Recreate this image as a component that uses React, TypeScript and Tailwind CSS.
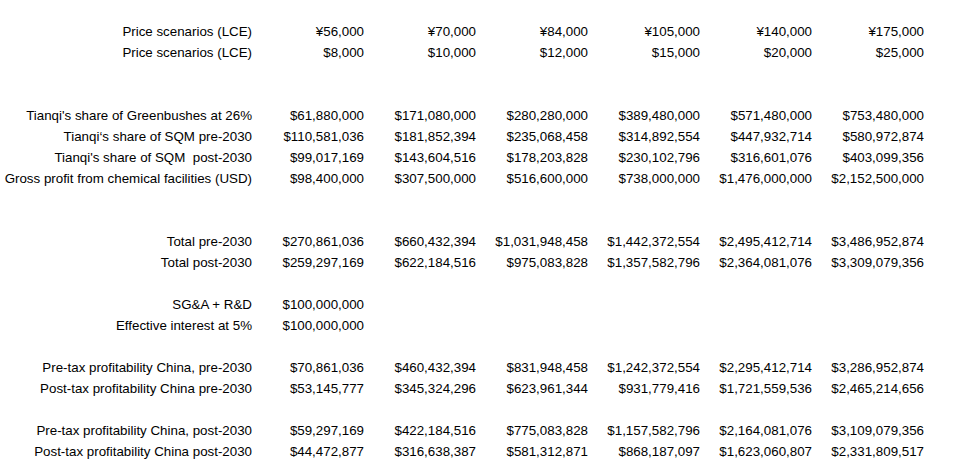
const rows: (string[] | null)[] = [
  ["Price scenarios (LCE)", "¥56,000", "¥70,000", "¥84,000", "¥105,000", "¥140,000", "¥175,000"],
  ["Price scenarios (LCE)", "$8,000", "$10,000", "$12,000", "$15,000", "$20,000", "$25,000"],
  null,
  null,
  ["Tianqi's share of Greenbushes at 26%", "$61,880,000", "$171,080,000", "$280,280,000", "$389,480,000", "$571,480,000", "$753,480,000"],
  ["Tianqi‘s share of SQM pre-2030", "$110,581,036", "$181,852,394", "$235,068,458", "$314,892,554", "$447,932,714", "$580,972,874"],
  ["Tianqi's share of SQM  post-2030", "$99,017,169", "$143,604,516", "$178,203,828", "$230,102,796", "$316,601,076", "$403,099,356"],
  ["Gross profit from chemical facilities (USD)", "$98,400,000", "$307,500,000", "$516,600,000", "$738,000,000", "$1,476,000,000", "$2,152,500,000"],
  null,
  null,
  ["Total pre-2030", "$270,861,036", "$660,432,394", "$1,031,948,458", "$1,442,372,554", "$2,495,412,714", "$3,486,952,874"],
  ["Total post-2030", "$259,297,169", "$622,184,516", "$975,083,828", "$1,357,582,796", "$2,364,081,076", "$3,309,079,356"],
  null,
  ["SG&A + R&D", "$100,000,000", "", "", "", "", ""],
  ["Effective interest at 5%", "$100,000,000", "", "", "", "", ""],
  null,
  ["Pre-tax profitability China, pre-2030", "$70,861,036", "$460,432,394", "$831,948,458", "$1,242,372,554", "$2,295,412,714", "$3,286,952,874"],
  ["Post-tax profitability China pre-2030", "$53,145,777", "$345,324,296", "$623,961,344", "$931,779,416", "$1,721,559,536", "$2,465,214,656"],
  null,
  ["Pre-tax profitability China, post-2030", "$59,297,169", "$422,184,516", "$775,083,828", "$1,157,582,796", "$2,164,081,076", "$3,109,079,356"],
  ["Post-tax profitability China post-2030", "$44,472,877", "$316,638,387", "$581,312,871", "$868,187,097", "$1,623,060,807", "$2,331,809,517"],
];

export default function App() {
  return (
    <div className="w-[958px] h-[472px] bg-white pt-[21px] text-[13.33px] text-black whitespace-pre" style={{ fontFamily: '"Liberation Sans", Arial, sans-serif' }}>
      <div className="grid grid-cols-[256px_repeat(6,112px)] auto-rows-[21px] leading-[21px]">
        {rows.map((r, i) =>
          r ? (
            r.map((c, j) => (
              <div key={`${i}-${j}`} className="text-right pr-1">
                {c}
              </div>
            ))
          ) : (
            <div key={i} className="col-span-7" />
          )
        )}
      </div>
    </div>
  );
}
